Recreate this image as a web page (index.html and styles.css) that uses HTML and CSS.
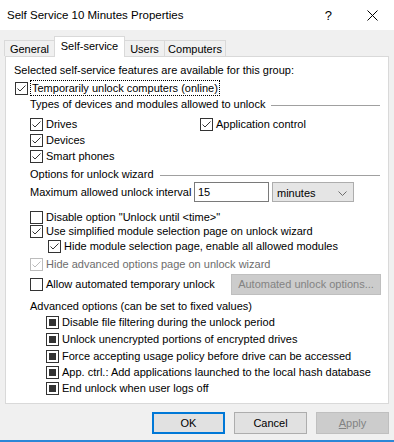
FILE: index.html
```html
<!DOCTYPE html>
<html lang="en">
<head>
    <meta charset="UTF-8">
    <title>Self Service 10 Minutes Properties</title>
    <link rel="stylesheet" href="styles.css">
</head>
<body>
    <div class="window">
        <div class="titlebar">
            <span class="title">Self Service 10 Minutes Properties</span>
            <span class="help">?</span>
            <svg class="close" width="11" height="11" viewBox="0 0 11 11">
                <path d="M0.5 0.5 L10.5 10.5 M10.5 0.5 L0.5 10.5" stroke="#000" stroke-width="1"/>
            </svg>
        </div>

        <div class="tabs">
            <div class="tab tab-general">General</div>
            <div class="tab tab-self active">Self-service</div>
            <div class="tab tab-users">Users</div>
            <div class="tab tab-computers">Computers</div>
        </div>

        <div class="panel">
            <div class="row intro">Selected self-service features are available for this group:</div>

            <div class="row lvl0 gap-4">
                <span class="cb checked"></span>
                <span class="focus">Temporarily unlock computers (online)</span>
            </div>

            <div class="row group lvl1 gap-2">
                <span>Types of devices and modules allowed to unlock</span>
                <span class="rule"></span>
            </div>

            <div class="row lvl1 gap-6 two-col">
                <label class="item"><span class="cb checked"></span>Drives</label>
                <label class="item"><span class="cb checked"></span>Application control</label>
            </div>
            <div class="row lvl1 gap-2">
                <label class="item"><span class="cb checked"></span>Devices</label>
            </div>
            <div class="row lvl1 gap-2">
                <label class="item"><span class="cb checked"></span>Smart phones</label>
            </div>

            <div class="row group lvl1 gap-4">
                <span>Options for unlock wizard</span>
                <span class="rule"></span>
            </div>

            <div class="row interval lvl1 gap-1">
                <span class="interval-label">Maximum allowed unlock interval</span>
                <span class="textbox">15</span>
                <span class="combo">minutes
                    <svg width="9" height="5" viewBox="0 0 9 5">
                        <path d="M0.5 0.5 L4.5 4.5 L8.5 0.5" fill="none" stroke="#6d6d6d" stroke-width="1"/>
                    </svg>
                </span>
            </div>

            <div class="row lvl1 gap-8">
                <label class="item"><span class="cb"></span>Disable option "Unlock until &lt;time&gt;"</label>
            </div>
            <div class="row lvl1">
                <label class="item"><span class="cb checked"></span>Use simplified module selection page on unlock wizard</label>
            </div>
            <div class="row lvl2 gap-1">
                <label class="item"><span class="cb checked"></span>Hide module selection page, enable all allowed modules</label>
            </div>
            <div class="row lvl1 gap-4">
                <label class="item disabled"><span class="cb checked"></span>Hide advanced options page on unlock wizard</label>
            </div>

            <div class="row auto lvl1 gap-2">
                <label class="item"><span class="cb"></span>Allow automated temporary unlock</label>
                <span class="btn btn-wide disabled">Automated unlock options...</span>
            </div>

            <div class="row lvl1 gap-4">Advanced options (can be set to fixed values)</div>

            <div class="row lvl-adv gap-2">
                <label class="item"><span class="cb mixed"></span>Disable file filtering during the unlock period</label>
            </div>
            <div class="row lvl-adv gap-3">
                <label class="item"><span class="cb mixed"></span>Unlock unencrypted portions of encrypted drives</label>
            </div>
            <div class="row lvl-adv gap-3">
                <label class="item"><span class="cb mixed"></span>Force accepting usage policy before drive can be accessed</label>
            </div>
            <div class="row lvl-adv gap-2">
                <label class="item"><span class="cb mixed"></span>App. ctrl.: Add applications launched to the local hash database</label>
            </div>
            <div class="row lvl-adv gap-2">
                <label class="item"><span class="cb mixed"></span>End unlock when user logs off</label>
            </div>
        </div>

        <div class="buttons">
            <span class="btn default">OK</span>
            <span class="btn">Cancel</span>
            <span class="btn disabled"><u>A</u>pply</span>
        </div>
    </div>
</body>
</html>
```

FILE: styles.css
```css
* {
    margin: 0;
    padding: 0;
    box-sizing: border-box;
}

body {
    width: 394px;
    height: 442px;
    overflow: hidden;
    background: #f0f0f0;
    color: #000;
    font-family: 'Liberation Sans', Arial, sans-serif;
    font-size: 11px;
}

.window {
    height: 442px;
    border-bottom: 2px solid #2b87d7;
    display: flex;
    flex-direction: column;
}

/* title bar */

.titlebar {
    height: 30px;
    background: #fff;
    display: flex;
    align-items: center;
    padding-left: 7px;
}

.title {
    flex: 1;
    font-size: 11.5px;
}

.help {
    font-size: 13px;
    margin-right: 35px;
}

.close {
    margin-right: 16px;
}

/* tabs */

.tabs {
    display: flex;
    align-items: flex-end;
    height: 26px;
    padding-left: 4px;
    position: relative;
    z-index: 1;
}

.tab {
    height: 16px;
    border: 1px solid #d9d9d9;
    border-bottom: none;
    background: #f0f0f0;
    display: flex;
    align-items: center;
    justify-content: center;
}

.tab-general { width: 50px; border-right: none; }
.tab-self { width: 71px; }
.tab-users { width: 40px; border-left: none; }
.tab-computers { width: 61px; border-left: none; }

.tab.active {
    height: 21px;
    background: #fff;
    margin-bottom: -1px;
    padding-bottom: 3px;
}

/* panel */

.panel {
    margin: 0 5px;
    height: 348px;
    background: #fff;
    border: 1px solid #d9d9d9;
    padding-top: 6px;
}

.row {
    height: 14px;
    display: flex;
    align-items: center;
    white-space: nowrap;
}

.intro { padding-left: 8px; }
.lvl0 { padding-left: 9px; }
.lvl1 { padding-left: 24px; }
.lvl2 { padding-left: 42px; }
.lvl-adv { padding-left: 40px; }

.gap-1 { margin-top: 1px; }
.gap-2 { margin-top: 2px; }
.gap-3 { margin-top: 3px; }
.gap-4 { margin-top: 4px; }
.gap-6 { margin-top: 6px; }
.gap-8 { margin-top: 8px; }

.group {
    padding-right: 8px;
}

.rule {
    flex: 1;
    height: 1px;
    background: #a0a0a0;
    margin-left: 6px;
    margin-top: 2px;
}

.two-col .item:first-child {
    width: 170px;
}

.item {
    display: flex;
    align-items: center;
}

.cb {
    width: 13px;
    height: 13px;
    border: 1px solid #333;
    background: #fff;
    margin-right: 3px;
    flex-shrink: 0;
    display: flex;
    align-items: center;
    justify-content: center;
}

.cb.checked {
    background: #fff url("data:image/svg+xml;utf8,<svg xmlns='http://www.w3.org/2000/svg' width='11' height='11'><path d='M1.5 5.5 L4 8 L9.5 2.5' fill='none' stroke='%23333' stroke-width='1'/></svg>") no-repeat center;
}

.cb.mixed::after {
    content: "";
    width: 7px;
    height: 7px;
    background: #333;
}

.item.disabled {
    color: #6d6d6d;
}

.item.disabled .cb {
    border-color: #bcbcbc;
    background: #fff url("data:image/svg+xml;utf8,<svg xmlns='http://www.w3.org/2000/svg' width='11' height='11'><path d='M1.5 5.5 L4 8 L9.5 2.5' fill='none' stroke='%23bcbcbc' stroke-width='1'/></svg>") no-repeat center;
}

.focus {
    outline: 1px dotted #000;
    padding: 0 1px;
    line-height: 14px;
}

/* interval */

.interval {
    height: 20px;
}

.interval-label {
    min-width: 164px;
}

.textbox {
    width: 75px;
    height: 20px;
    border: 1px solid #7a7a7a;
    background: #fff;
    padding-left: 3px;
    display: flex;
    align-items: center;
}

.combo {
    width: 82px;
    height: 20px;
    margin-left: 3px;
    border: 1px solid #adadad;
    background: #e5e5e5;
    padding: 2px 6px 0 4px;
    display: flex;
    align-items: center;
    justify-content: space-between;
}

/* automated unlock */

.auto {
    height: 22px;
}

.auto .item {
    width: 201px;
}

/* buttons */

.btn {
    width: 73px;
    height: 22px;
    border: 1px solid #adadad;
    background: #e1e1e1;
    display: flex;
    align-items: center;
    justify-content: center;
}

.btn.default {
    border: 2px solid #0078d7;
}

.btn.disabled {
    border-color: #bfbfbf;
    background: #cccccc;
    color: #838383;
}

.btn-wide {
    width: 150px;
    height: 21px;
}

.buttons {
    display: flex;
    justify-content: flex-end;
    gap: 9px;
    padding-right: 5px;
    margin-top: 8px;
}
```
